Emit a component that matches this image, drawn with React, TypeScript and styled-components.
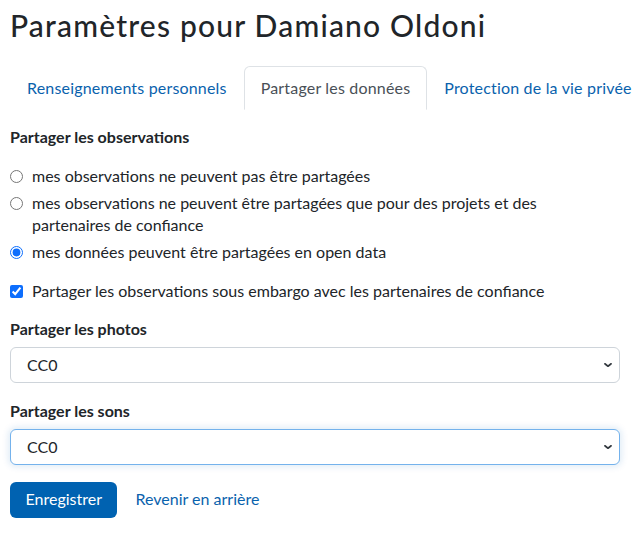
import * as React from "react";
import styled, { createGlobalStyle } from "styled-components";

const GlobalStyle = createGlobalStyle`
  html, body {
    margin: 0;
    padding: 0;
    background: #ffffff;
  }
  body {
    font-family: Lato, "Open Sans", "Liberation Sans", sans-serif;
    font-size: 16px;
    line-height: 22.5px;
    color: #212529;
  }
  * {
    box-sizing: border-box;
  }
`;

const Page = styled.div`
  padding-left: 10px;
`;

const Title = styled.h1`
  margin: 8px 0 24px;
  font-size: 30px;
  line-height: 34px;
  font-weight: 500;
  letter-spacing: 1.2px;
  color: #212529;
`;

const TabBar = styled.ul`
  display: flex;
  margin: 0;
  padding: 0;
  list-style: none;
  border-bottom: 1px solid #dee2e6;
`;

const Tab = styled.li<{ $active?: boolean }>`
  margin-bottom: -1px;
  padding: 10px 16px;
  line-height: 22px;
  letter-spacing: 0.18px;
  border: 1px solid ${(p) => (p.$active ? "#dee2e6" : "transparent")};
  border-bottom-color: ${(p) => (p.$active ? "#ffffff" : "transparent")};
  border-radius: 6px 6px 0 0;
  background: #ffffff;
  color: ${(p) => (p.$active ? "#495057" : "#0a62ad")};
  white-space: nowrap;
  cursor: pointer;
`;

const Form = styled.form`
  width: 610px;
  padding-top: 16px;
`;

const SectionTitle = styled.div`
  font-weight: 700;
  margin-bottom: 16px;
`;

const ChoiceList = styled.div`
  display: flex;
  flex-direction: column;
  gap: 4.5px;
  max-width: 575px;
  margin-bottom: 16px;
`;

const Choice = styled.label`
  display: flex;
  align-items: flex-start;
  gap: 9px;
  cursor: pointer;
`;

const Control = styled.input`
  flex: none;
  width: 13px;
  height: 13px;
  margin: 5px 0 0 0;
  accent-color: #0d6efd;
`;

const Group = styled.div<{ $tight?: boolean }>`
  margin-bottom: ${(p) => (p.$tight ? "15.5px" : "16.5px")};
`;

const FieldLabel = styled.label`
  display: block;
  font-weight: 700;
  margin-bottom: 7px;
`;

const Select = styled.select<{ $focused?: boolean }>`
  display: block;
  width: 100%;
  height: 36px;
  padding: 0 36px 0 16px;
  font: inherit;
  color: #212529;
  background-color: #ffffff;
  background-image: url("data:image/svg+xml,%3csvg xmlns='http://www.w3.org/2000/svg' viewBox='0 0 16 16'%3e%3cpath fill='none' stroke='%23343a40' stroke-linecap='round' stroke-linejoin='round' stroke-width='2.6' d='M3 6l5 4 5-4'/%3e%3c/svg%3e");
  background-repeat: no-repeat;
  background-position: right 6px center;
  background-size: 10px 10px;
  border: 1px solid ${(p) => (p.$focused ? "#74b2ec" : "#ced4da")};
  border-radius: 6px;
  box-shadow: ${(p) => (p.$focused ? "0 0 6px 2px rgba(0, 98, 177, 0.12)" : "none")};
  appearance: none;
  outline: none;
`;

const Actions = styled.div`
  display: flex;
  align-items: center;
  gap: 18px;
`;

const PrimaryButton = styled.button`
  height: 36px;
  padding: 0 15.5px;
  font: inherit;
  color: #ffffff;
  background: #0062b1;
  border: none;
  border-radius: 6px;
  cursor: pointer;
`;

const BackLink = styled.a`
  color: #0a62ad;
  text-decoration: none;
`;

export default function App() {
  const [sharing, setSharing] = React.useState("open");
  const [embargo, setEmbargo] = React.useState(true);

  return (
    <Page>
      <GlobalStyle />
      <Title>Paramètres pour Damiano Oldoni</Title>
      <TabBar>
        <Tab>Renseignements personnels</Tab>
        <Tab $active>Partager les données</Tab>
        <Tab>Protection de la vie privée</Tab>
      </TabBar>
      <Form onSubmit={(e) => e.preventDefault()}>
        <SectionTitle>Partager les observations</SectionTitle>
        <ChoiceList>
          <Choice>
            <Control
              type="radio"
              name="sharing"
              checked={sharing === "none"}
              onChange={() => setSharing("none")}
            />
            <span>mes observations ne peuvent pas être partagées</span>
          </Choice>
          <Choice>
            <Control
              type="radio"
              name="sharing"
              checked={sharing === "trusted"}
              onChange={() => setSharing("trusted")}
            />
            <span>
              mes observations ne peuvent être partagées que pour des projets
              et des partenaires de confiance
            </span>
          </Choice>
          <Choice>
            <Control
              type="radio"
              name="sharing"
              checked={sharing === "open"}
              onChange={() => setSharing("open")}
            />
            <span>mes données peuvent être partagées en open data</span>
          </Choice>
        </ChoiceList>
        <Group $tight>
          <Choice>
            <Control
              type="checkbox"
              checked={embargo}
              onChange={() => setEmbargo(!embargo)}
            />
            <span>
              Partager les observations sous embargo avec les partenaires de
              confiance
            </span>
          </Choice>
        </Group>
        <Group>
          <FieldLabel htmlFor="photos">Partager les photos</FieldLabel>
          <Select id="photos" defaultValue="cc0">
            <option value="cc0">CC0</option>
            <option value="ccby">CC BY</option>
          </Select>
        </Group>
        <Group>
          <FieldLabel htmlFor="sons">Partager les sons</FieldLabel>
          <Select id="sons" defaultValue="cc0" $focused>
            <option value="cc0">CC0</option>
            <option value="ccby">CC BY</option>
          </Select>
        </Group>
        <Actions>
          <PrimaryButton type="submit">Enregistrer</PrimaryButton>
          <BackLink href="#">Revenir en arrière</BackLink>
        </Actions>
      </Form>
    </Page>
  );
}
